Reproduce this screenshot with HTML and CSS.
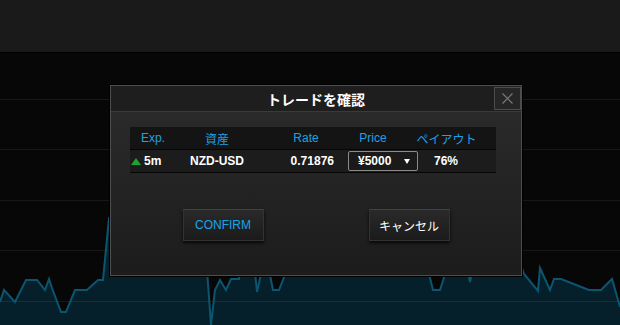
FILE: index.html
```html
<html>
  <head>
    <title>トレードを確認</title>
    <link rel="stylesheet" href="styles.css">
  </head>
  <body>
    <div class="topbar"></div>
    <div class="chart">
      <svg class="chart-svg" viewBox="0 53 620 272" width="620" height="272">
        <polygon class="area" points="0,302 4,290 15,302 26,280 37,280 45,290 49,279 52,288 61,312 66,312 75,290 87,290 98,280 103,280 109,218 150,200 205,230 207,270 211,325 215,290 220,280 226,290 231,279 239,279 242,260 254,262 257,292 263,265 268,265 273,290 279,290 290,262 420,250 428,270 433,290 440,290 449,262 466,262 470,282 474,262 520,262 524,274 538,291 540,268 550,290 554,279 561,279 589,290 601,290 612,279 620,307 620,325 0,325"/>
        <g class="grid">
          <line x1="0" y1="99.5" x2="620" y2="99.5"/>
          <line x1="0" y1="149.5" x2="620" y2="149.5"/>
          <line x1="0" y1="200.5" x2="620" y2="200.5"/>
          <line x1="0" y1="250.5" x2="620" y2="250.5"/>
          <line x1="0" y1="301.5" x2="620" y2="301.5"/>
        </g>
        <polyline class="line" points="0,302 4,290 15,302 26,280 37,280 45,290 49,279 52,288 61,312 66,312 75,290 87,290 98,280 103,280 109,218 150,200 205,230 207,270 211,325 215,290 220,280 226,290 231,279 239,279 242,260 254,262 257,292 263,265 268,265 273,290 279,290 290,262 420,250 428,270 433,290 440,290 449,262 466,262 470,282 474,262 520,262 524,274 538,291 540,268 550,290 554,279 561,279 589,290 601,290 612,279 620,307"/>
      </svg>

      <div class="dialog">
        <div class="dialog-head">
          <span class="dialog-title">トレードを確認</span>
          <button class="close">
            <svg width="11" height="11" viewBox="0 0 11 11"><path d="M0.5 0.5 L10.5 10.5 M10.5 0.5 L0.5 10.5"/></svg>
          </button>
        </div>
        <div class="dialog-body">
          <div class="trade-table">
            <div class="thead">
              <span>Exp.</span>
              <span>資産</span>
              <span class="h-rate">Rate</span>
              <span>Price</span>
              <span class="h-payout">ペイアウト</span>
            </div>
            <div class="trow">
              <span class="exp"><i class="up"></i>5m</span>
              <span class="asset">NZD-USD</span>
              <span class="rate">0.71876</span>
              <div class="price-select"><span>¥5000</span><i class="caret"></i></div>
              <span class="payout">76%</span>
            </div>
          </div>
          <div class="actions">
            <button class="btn btn-confirm">CONFIRM</button>
            <button class="btn btn-cancel">キャンセル</button>
          </div>
        </div>
      </div>
    </div>
  </body>
</html>
```

FILE: styles.css
```css
/* Page */
body {
  margin: 0;
  width: 620px;
  height: 325px;
  overflow: hidden;
  background-color: #070707;
  font-family: "Liberation Sans", Arial, "Noto Sans CJK JP", sans-serif;
}

.topbar {
  height: 52px;
  background-color: #1a1a1a;
  border-bottom: 1px solid #000;
}

/* Chart */
.chart {
  position: relative;
  height: 272px;
}

.chart-svg {
  position: absolute;
  top: 0;
  left: 0;
  display: block;
}

.chart-svg .area {
  fill: #05202a;
}

.chart-svg .grid line {
  stroke: rgba(255, 255, 255, 0.07);
  stroke-width: 1;
}

.chart-svg .line {
  fill: none;
  stroke: #0c5570;
  stroke-width: 2;
  stroke-linejoin: miter;
}

/* Dialog */
.dialog {
  position: absolute;
  left: 110px;
  top: 32px;
  width: 410px;
  height: 189px;
  border: 1px solid #4e4e4e;
  box-shadow: 0 0 0 1px #000;
  background: linear-gradient(#2c2c2c, #1c1c1c);
  display: flex;
  flex-direction: column;
}

.dialog-head {
  position: relative;
  height: 25px;
  background-color: #1e1e1e;
  border-bottom: 1px solid #3a3a3a;
  display: flex;
  align-items: center;
  justify-content: center;
}

.dialog-title {
  color: #fff;
  font-size: 14px;
  font-weight: bold;
  font-family: "Noto Sans CJK JP", sans-serif;
}

.close {
  position: absolute;
  right: 0;
  top: 1px;
  width: 27px;
  height: 23px;
  padding: 0;
  border: 1px solid #4c4c4c;
  background-color: #262626;
  display: flex;
  align-items: center;
  justify-content: center;
}

.close path {
  stroke: #7a7a7a;
  stroke-width: 1.2;
  fill: none;
}

.dialog-body {
  flex: 1;
  padding-top: 15px;
}

/* Trade table */
.trade-table {
  width: 366px;
  margin-left: 19px;
  font-size: 12px;
}

.thead {
  display: grid;
  grid-template-columns: 46px 82px 96px 38px 104px;
  align-items: center;
  height: 22px;
  background-color: #141414;
  border-bottom: 1px solid #060606;
  color: #1ca2e6;
  text-align: center;
}

.thead .h-payout {
  padding-left: 5px;
}

.trow {
  display: grid;
  grid-template-columns: 46px 82px 90px 70px 78px;
  align-items: center;
  height: 22px;
  background-color: #1c1c1c;
  border-bottom: 1px solid #060606;
  color: #fff;
  font-weight: bold;
}

.exp {
  display: flex;
  align-items: center;
  gap: 3px;
  padding-left: 1px;
}

.up {
  width: 0;
  height: 0;
  border-left: 5px solid transparent;
  border-right: 5px solid transparent;
  border-bottom: 7px solid #1ca431;
}

.asset {
  text-align: center;
}

.rate {
  text-align: right;
  padding-right: 14px;
}

.price-select {
  height: 18px;
  border: 1px solid #8a8a8a;
  border-radius: 2px;
  background-color: #1a1a1a;
  display: flex;
  align-items: center;
  justify-content: space-between;
  padding: 0 7px 0 9px;
}

.caret {
  width: 0;
  height: 0;
  border-left: 3px solid transparent;
  border-right: 3px solid transparent;
  border-top: 5px solid #fff;
}

.payout {
  padding-left: 16px;
}

/* Buttons */
.actions {
  display: flex;
  justify-content: center;
  gap: 105px;
  margin-top: 36px;
}

.btn {
  width: 81px;
  height: 32px;
  padding: 0;
  font-size: 12px;
  font-family: "Liberation Sans", Arial, "Noto Sans CJK JP", sans-serif;
  border: 1px solid #333;
  border-top-color: #424242;
  background: linear-gradient(#2a2a2a, #1b1b1b);
  box-shadow: 0 2px 3px rgba(0, 0, 0, 0.8);
  cursor: pointer;
}

.btn-confirm {
  color: #18a4ec;
}

.btn-cancel {
  color: #fff;
}
```
